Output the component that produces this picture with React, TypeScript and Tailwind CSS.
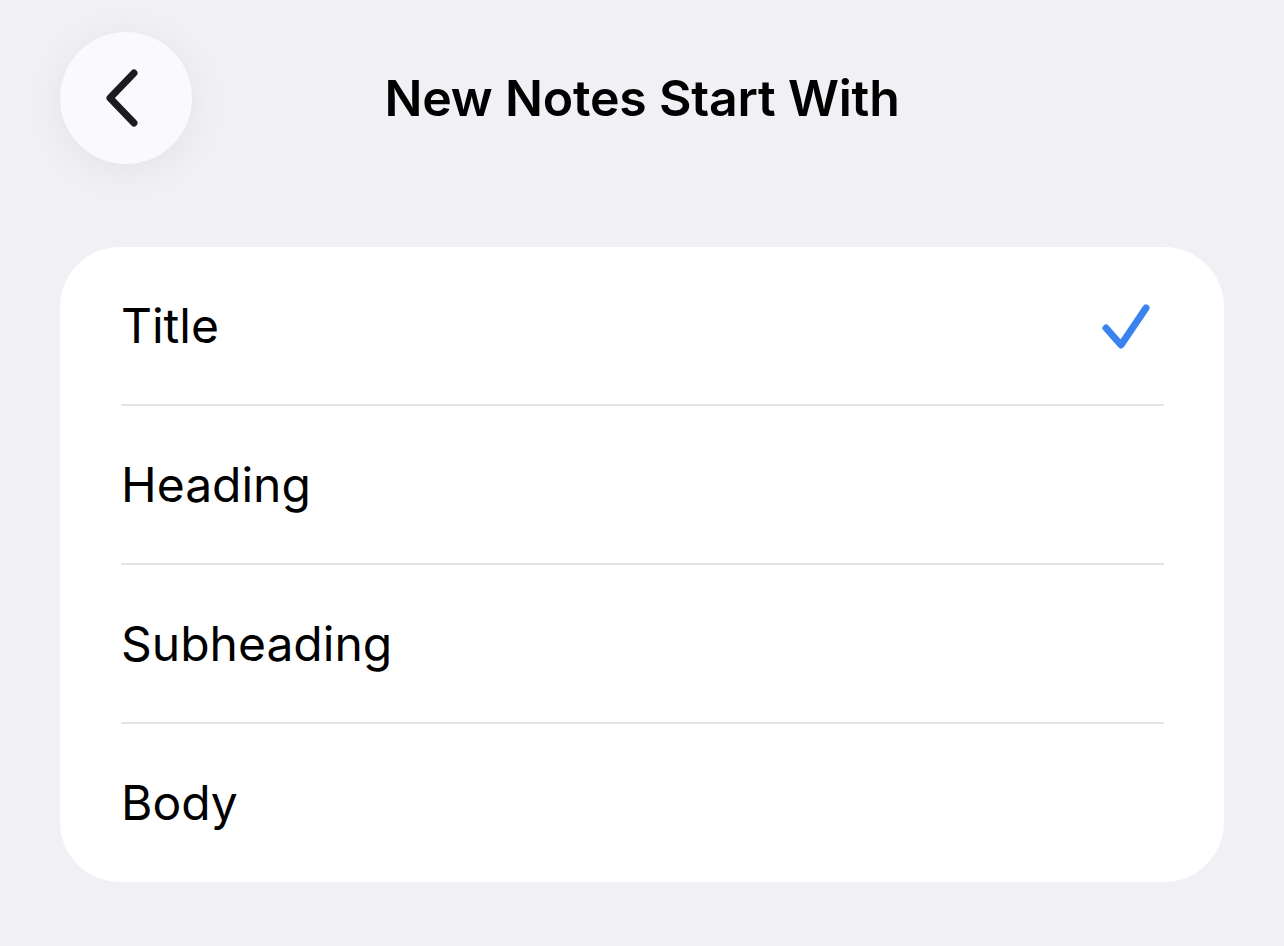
const options = ["Title", "Heading", "Subheading", "Body"];

function BackButton() {
  return (
    <button className="flex h-[132px] w-[132px] items-center justify-center rounded-full bg-[#fafafc] shadow-[0_6px_40px_rgba(0,0,0,0.06)]">
      <svg width="40" height="64" viewBox="0 0 40 64" fill="none" className="mr-[4px]">
        <path
          d="M30 7 L6 32 L30 57"
          stroke="#1c1c1e"
          strokeWidth="7"
          strokeLinecap="round"
          strokeLinejoin="round"
        />
      </svg>
    </button>
  );
}

function Check() {
  return (
    <svg width="52" height="50" viewBox="0 0 52 50" fill="none">
      <path
        d="M6 26 L21 43 L46 6"
        stroke="#3a82f0"
        strokeWidth="7"
        strokeLinecap="round"
        strokeLinejoin="round"
      />
    </svg>
  );
}

export default function App() {
  return (
    <div
      className="h-[946px] w-[1284px] bg-[#f0f0f5] text-black"
      style={{ fontFamily: "Inter, 'Noto Sans', sans-serif" }}
    >
      {/* header */}
      <div className="relative flex h-[196px] items-start px-[60px] pt-[32px]">
        <BackButton />
        <h1 className="absolute left-0 right-0 top-[68px] text-center text-[50px] font-semibold leading-[60px] tracking-[-0.2px]">
          New Notes Start With
        </h1>
      </div>

      {/* options card */}
      <div className="mx-[60px] mt-[51px] overflow-hidden rounded-[60px] bg-white">
        {options.map((opt, i) => (
          <div key={opt} className="pl-[61px] pr-[60px]">
            <div
              className={
                "flex items-center justify-between " +
                (i < options.length - 1 ? "h-[159px] border-b-2 border-[#e4e4e8]" : "h-[158px]")
              }
            >
              <span className="text-[48px] leading-none">{opt}</span>
              {i === 0 && (
                <span className="pr-[12px] pt-[2px]">
                  <Check />
                </span>
              )}
            </div>
          </div>
        ))}
      </div>
    </div>
  );
}
